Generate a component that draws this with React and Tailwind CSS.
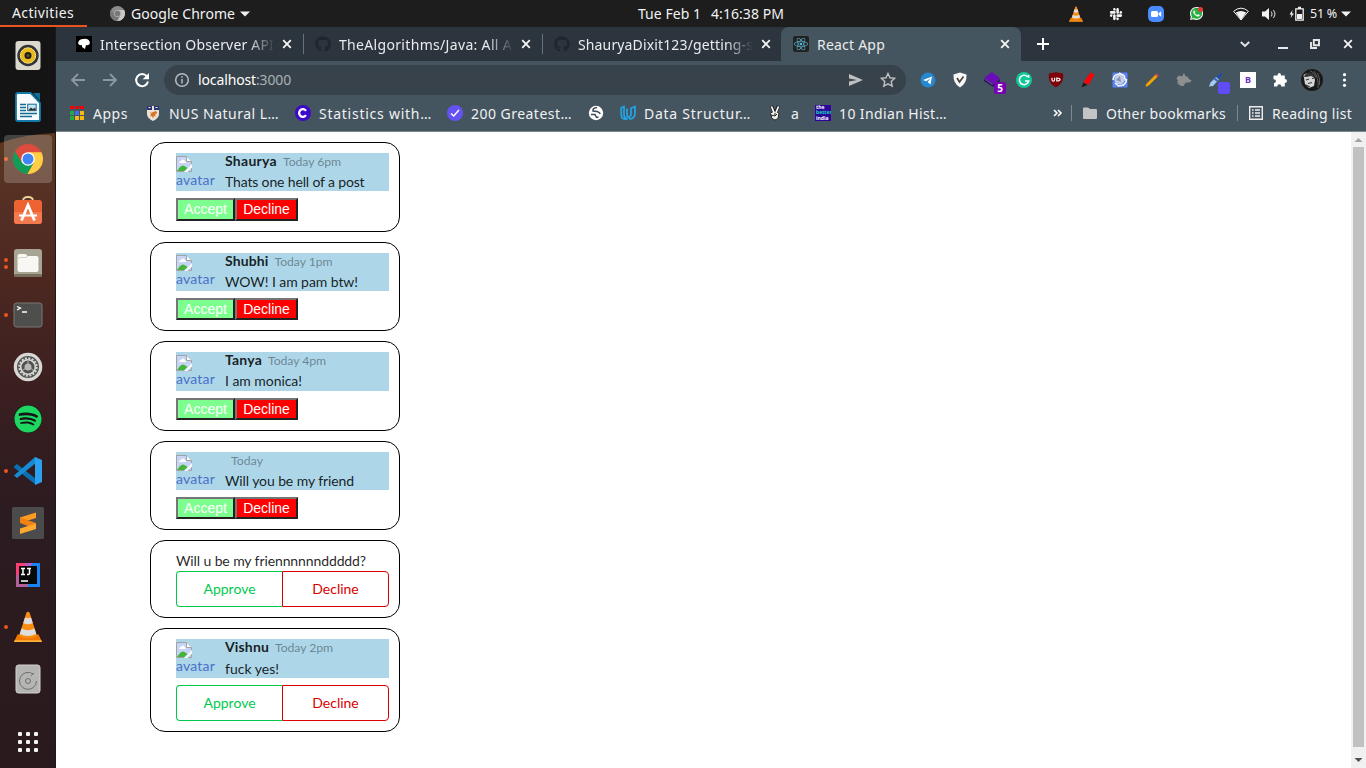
import { useLayoutEffect, useRef } from "react";
import { FaGithub, FaSlack, FaWhatsapp, FaReact, FaSpotify } from "react-icons/fa";

/* Label that spreads its letters over a given width. */
function Fit({ w, className = "", children }) {
  const ref = useRef(null);
  useLayoutEffect(() => {
    const el = ref.current;
    el.style.letterSpacing = "0px";
    const natural = el.getBoundingClientRect().width;
    el.style.letterSpacing = (w - natural) / el.textContent.length + "px";
  }, [w, children]);
  return (
    <span ref={ref} className={"inline-block shrink-0 whitespace-pre " + className}>
      {children}
    </span>
  );
}

function Svg({ s = 16, vb = "0 0 16 16", className = "", children }) {
  return (
    <svg width={s} height={s} viewBox={vb} className={"block shrink-0 " + className} fill="none">
      {children}
    </svg>
  );
}

function Cone({ s }) {
  return (
    <Svg s={s} vb="0 0 28 32">
      <path d="M3.500 23.500h21L28 31H0z" fill="#f07800" />
      <path d="M.6 29.300h26.800L28 31H0z" fill="#ffb13b" />
      <path d="M12.500 1.500Q14 0 15.500 1.500L23 25Q14 30 5 25z" fill="#fb8c12" />
      <path d="M11 6.500Q14 8 17 6.500L18.700 12Q14 14.500 9.300 12zM7.500 17.500Q14 21 20.500 17.500L22.200 23Q14 27 5.800 23z" fill="#dedede" />
    </Svg>
  );
}

function ChromeLogo({ s, gray }) {
  const c = gray ? ["#8a8a8a", "#777", "#c8c8c8", "#b4b4b4", "#777"] : ["#dd4b3e", "#119d58", "#ffce44", "#fff", "#4285f4"];
  return (
    <Svg s={s} vb="0 0 30 30">
      <circle cx="15" cy="15" r="15" fill={c[0]} />
      <path d="M2 7.500A15 15 0 0 0 14.500 30L21 18.500 15 15 9 18.500z" fill={c[1]} />
      <path d="M15 8.200H28.400A15 15 0 0 1 14.500 30L21 18.500z" fill={c[2]} />
      <circle cx="15" cy="15" r="6.800" fill={c[3]} />
      <circle cx="15" cy="15" r="5.500" fill={c[4]} />
    </Svg>
  );
}

function TopBar() {
  return (
    <header className="flex h-[27px] shrink-0 bg-[#1d1d1d] text-[14px] leading-[26px] text-[#f2f2f2]">
      <div className="w-[87px] border-b-2 border-[#e95420] pl-3">
        <Fit w={62}>Activities</Fit>
      </div>
      <div className="flex w-[551px] items-center pl-[23px]">
        <ChromeLogo s={15} gray />
        <Fit w={104} className="ml-[6px]">Google Chrome</Fit>
        <Svg s={10} vb="0 0 10 10" className="ml-[5px]"><path d="M0 2.500h10L5 7.500z" fill="#f2f2f2" /></Svg>
      </div>
      <div className="flex w-[430px] items-center">
        <Fit w={63}>Tue Feb 1</Fit>
        <Fit w={73} className="ml-[10px]">4:16:38 PM</Fit>
      </div>
      <div className="flex items-center">
        <Cone s={16} />
        <FaSlack size={14} className="ml-[25px]" />
        <Svg s={16} className="ml-[25px]">
          <rect width="16" height="16" rx="5" fill="#4a8cff" />
          <rect x="3" y="5" width="7" height="6" rx="1.500" fill="#fff" />
          <path d="M10.500 7.200l2.700-1.900v5.400l-2.700-1.900z" fill="#fff" />
        </Svg>
        <div className="relative ml-6 flex size-4 items-center justify-center">
          <svg width="14" height="14" viewBox="0 0 14 14" className="absolute"><circle cx="7" cy="7" r="6" fill="#25b33e" /></svg>
          <FaWhatsapp size={15} className="relative" />
          <div className="absolute right-[1px] top-[1px] size-[5px] rounded-full bg-[#e53935]" />
        </div>
        <Svg s={16} className="ml-[29px]">
          <path d="M.6 5.300Q8-1 15.400 5.300L8 14z" stroke="#f2f2f2" />
          <path d="M2.800 6.500Q8 3.500 13.200 6.500L8 14z" fill="#f2f2f2" />
        </Svg>
        <Svg s={16} className="ml-3">
          <path d="M1 5.500h3L8 2v12L4 10.500H1z" fill="#f2f2f2" />
          <path d="M10 5.500q2 2.500 0 5M12.300 4q3.200 4 0 8" stroke="#bdbdbd" strokeWidth="1.200" />
        </Svg>
        <Svg s={16} className="ml-[12px]">
          <path d="M3.500 4L.5 8.500h2L1.500 12 5 7.500H3z" fill="#f2f2f2" />
          <path d="M6.800 2.800h7.400v11.400H6.800zM9 1.500h3" stroke="#f2f2f2" strokeWidth="1.300" />
          <path d="M8 8h5v5H8z" fill="#f2f2f2" />
        </Svg>
        <Fit w={27} className="ml-[5px] text-[12.500px]">51 %</Fit>
        <Svg s={10} vb="0 0 10 10" className="ml-[4px]"><path d="M0 2.500h10L5 7.500z" fill="#f2f2f2" /></Svg>
      </div>
    </header>
  );
}

const dockIcons = [
  <Svg s={30} vb="0 0 30 30">
    <rect x="2.500" y="1" width="25" height="29" rx="3" fill="#dcd8ce" />
    <circle cx="15" cy="15.500" r="10.700" fill="#303338" />
    <circle cx="15" cy="15.500" r="7.700" fill="#e9b91d" stroke="#ffe072" />
    <circle cx="15" cy="15.500" r="3.500" fill="#1d1d20" />
    <circle cx="15" cy="15.500" r="1.500" fill="#665522" />
  </Svg>,
  <Svg s={30} vb="0 0 30 30">
    <path d="M5 1h12.500L27 11v17q0 1-1.500 1H5q-2 0-2-2V3q0-2 2-2z" fill="#f7fbfd" stroke="#1279a8" strokeWidth="1.800" />
    <path d="M20 1h7v8z" fill="#0f6d98" />
    <path d="M7 12.500h6M7 15.500h6M7 18.500h6M7 21.500h17M7 24.500h12" stroke="#116b93" strokeWidth="1.300" />
    <rect x="14.700" y="12.200" width="8.500" height="6.500" fill="#c5e6f4" stroke="#116b93" />
    <path d="M15 18.500l3-3 2 1.500 2-1.500 1 3z" fill="#333" />
  </Svg>,
  <ChromeLogo s={30} />,
  <Svg s={30} vb="0 0 30 30" className="-mt-[3px]">
    <path d="M10 6q0-4 5-4t5 4" stroke="#ead39b" strokeWidth="1.800" />
    <rect x="1" y="5" width="28" height="24" rx="3" fill="#ed6332" />
    <path d="M1 17h28v9q0 3-3 3H4q-3 0-3-3z" fill="#f4794c" />
    <path d="M8.500 25.500L15 10l6.500 15.500" stroke="#fff" strokeWidth="2.800" />
    <path d="M6 20.500h18" stroke="#fff" strokeWidth="2" />
  </Svg>,
  <Svg s={30} vb="0 0 30 30">
    <rect x="1" y="1" width="28" height="28" rx="3" fill="#a8a493" />
    <rect x="1" y="26" width="28" height="3" rx="1.500" fill="#77705e" />
    <path d="M6.500 6h6l2 2h9q2 0 2 2v12q0 2-2 2h-17q-2 0-2-2V8q0-2 2-2z" fill="#f8f7f4" />
    <path d="M5 11q0-1.500 2-1.500h6L15 8" stroke="#d5d2c9" />
  </Svg>,
  <Svg s={30} vb="0 0 30 30">
    <rect x="1" y="3" width="28" height="24" rx="2.500" fill="#4e4e4c" stroke="#7b7874" />
    <path d="M4 6.500l3.500 1.500L4 10M9 12h5" stroke="#fff" strokeWidth="1.300" />
  </Svg>,
  <Svg s={30} vb="0 0 30 30">
    <circle cx="15" cy="15" r="14.300" fill="#d7d7d5" />
    <circle cx="15" cy="15" r="11" fill="#50504d" />
    <circle cx="15" cy="15" r="8.700" stroke="#d7d7d5" strokeWidth="2" strokeDasharray="2 1.420" />
    <circle cx="15" cy="15" r="7.300" stroke="#d7d7d5" strokeWidth="1.600" />
    <circle cx="15" cy="15" r="3.500" fill="#b7b7b5" />
    <path d="M15 9v4M10 18l3-2M20 18l-3-2" stroke="#b7b7b5" />
  </Svg>,
  <div className="flex size-[28px] items-center justify-center rounded-full bg-[#161616] text-[#1ed760]"><FaSpotify size={28} /></div>,
  <Svg s={30} vb="0 0 30 30">
    <path d="M1 10.500l3-2.500 19 15v6L1 11.500z" fill="#0a70b4" />
    <path d="M22 1L1 19.500 4 22 23 7z" fill="#168bd2" />
    <path d="M22 1l7 3v22l-7 3z" fill="#2ba0ee" />
  </Svg>,
  <Svg s={32} vb="0 0 32 32">
    <rect width="32" height="32" rx="1.500" fill="#4b4b4b" />
    <path d="M8 10.500L24 5.500v5.500L8 16z" fill="#ff9b20" />
    <path d="M8 10.500L24 16v6L8 16z" fill="#f08112" />
    <path d="M8 21.500L24 16.500V22L8 27z" fill="#ffa72e" />
  </Svg>,
  <Svg s={24} vb="0 0 24 24">
    <path d="M0 0h12v12H0z" fill="#fb3f75" />
    <path d="M12 0h12v24H12z" fill="#1784f5" />
    <path d="M0 12h12v12H0z" fill="#b0619a" />
    <path d="M8 0h9L12 6z" fill="#b65bc9" />
    <rect x="3" y="3" width="18" height="18" fill="#080808" />
    <path d="M5 5.500h4M7 5.500v6M5 11.500h4M11 5.500h4M13.500 5.500v5q0 1-2.500 1" stroke="#fff" strokeWidth="1.500" />
    <path d="M5 18h7" stroke="#fff" strokeWidth="1.500" />
  </Svg>,
  <Cone s={32} />,
  <Svg s={30} vb="0 0 30 30">
    <rect x="3" y="1" width="24" height="28" rx="2.500" fill="#b5b5b3" stroke="#d2d2d0" />
    <path d="M20 10A8.500 8.500 0 1 0 23.500 17M18 12l3-3" stroke="#6e6e6c" />
    <circle cx="15" cy="17" r="2.500" stroke="#6e6e6c" />
  </Svg>,
];
const running = { 2: 1, 4: 2, 5: 1, 8: 1, 11: 1 };

function Dock() {
  return (
    <aside className="relative flex w-14 shrink-0 flex-col border-r border-[#201719] bg-[linear-gradient(#5a3820_0,#5a3820_115px,#552f24_180px,#4b2720_260px,#3a1f20_365px,#2c1b20_480px,#2a1a1d_100%)] pt-[2px]">
      <svg width="55" height="120" viewBox="0 0 55 120" className="absolute left-0 top-0">
        <path d="M0 0h55v106Q25 107 0 116z" fill="#141414" />
      </svg>
      {dockIcons.map((icon, i) => (
        <div key={i} className="relative flex h-[52px] shrink-0 items-center">
          <div className="flex w-2 flex-col items-end gap-[3px]">
            {Array.from({ length: running[i] || 0 }, (_, k) => (
              <div key={k} className="size-1 rounded-full bg-[#e95420]" />
            ))}
          </div>
          <div className={"-ml-1 flex size-12 shrink-0 items-center justify-center rounded-[4px] " + (i === 2 ? "bg-white/20" : "")}>{icon}</div>
        </div>
      ))}
      <div className="mt-[27px] grid w-full grid-cols-[4px_4px_4px] justify-center gap-1 pl-[1px]">
        {Array.from({ length: 9 }, (_, k) => (
          <div key={k} className="size-1 rounded-[1px] bg-[#f2f2f2]" />
        ))}
      </div>
    </aside>
  );
}

const X = ({ className = "" }) => (
  <Svg s={10} vb="0 0 10 10" className={className}><path d="M1.200 1.200l7.600 7.600M8.800 1.200L1.200 8.800" stroke="#f5f5f5" strokeWidth="1.800" /></Svg>
);

function Tab({ icon, title, w, last, fadeCls, cls }) {
  return (
    <div className={"flex h-full shrink-0 items-center " + cls}>
      {icon}
      <div className={"ml-2 w-[175px] overflow-hidden whitespace-nowrap " + fadeCls}>
        <Fit w={w}>{title}</Fit>
      </div>
      <X className="ml-[8px]" />
      {!last && <div className="ml-[11px] h-5 w-px bg-[#66727a]" />}
    </div>
  );
}

function TabStrip() {
  const fade = "[mask-image:linear-gradient(to_right,black_148px,transparent_175px)]";
  return (
    <div className="flex h-[34px] shrink-0 bg-[#2c353d] text-[14px] text-[#e9ebec]">
      <Tab cls="pl-5 w-[248px]" fadeCls={fade} w={174} title="Intersection Observer API" icon={
        <Svg><path d="M0 0h16v16H0z" fill="#000" /><path d="M2 7q1-4 5-4 6-1 7 4-1 3-4 2l-1 4-3-2V9Q3 10 2 7z" fill="#fff" /></Svg>} />
      <Tab cls="pl-[11px] w-[239px]" fadeCls={fade} w={173} title="TheAlgorithms/Java: All A" icon={<FaGithub size={16} className="shrink-0 text-[#20262c]" />} />
      <Tab cls="pl-[11px] w-[238px]" fadeCls={fade} last w={175} title="ShauryaDixit123/getting-s" icon={<FaGithub size={16} className="shrink-0 text-[#20262c]" />} />
      <div className="flex h-full w-[240px] rounded-t-lg bg-[#455560]">
        <Tab cls="pl-[12px]" fadeCls="" last w={68} title="React App" icon={
          <div className="flex size-4 items-center justify-center rounded-[2px] bg-[#222]"><FaReact size={14} className="text-[#5cb8d6]" /></div>} />
      </div>
      <div className="flex flex-1 items-center">
        <Svg s={12} vb="0 0 12 12" className="ml-[16px]"><path d="M6 0v12M0 6h12" stroke="#fff" strokeWidth="2" /></Svg>
        <Svg s={10} vb="0 0 10 10" className="ml-[191px]"><path d="M.8 3L5 7l4.200-4" stroke="#e8e8e8" strokeWidth="1.800" /></Svg>
        <div className="ml-[28px] mt-[8px] h-[2px] w-[10px] bg-[#e8e8e8]" />
        <Svg s={10} vb="0 0 10 10" className="ml-[22px]"><path d="M3.800 1h5.200v5.200H3.800zM1 3v6h6" stroke="#e8e8e8" strokeWidth="1.900" /></Svg>
        <X className="ml-[23px]" />
      </div>
    </div>
  );
}

function Toolbar() {
  return (
    <div className="flex h-[37px] shrink-0 items-center bg-[#455560] text-[14px]">
      <Svg className="ml-[14px]"><path d="M15 8H2M8 2L2 8l6 6" stroke="#8d979d" strokeWidth="1.800" /></Svg>
      <Svg className="ml-4"><path d="M1 8h13M8 2l6 6-6 6" stroke="#8d979d" strokeWidth="1.800" /></Svg>
      <Svg className="ml-4"><path d="M12.800 4.300A6 6 0 1 0 14 9.500" stroke="#fff" strokeWidth="2" /><path d="M15 1v6.300H8.700z" fill="#fff" /></Svg>
      <div className="ml-[14px] flex h-[30px] w-[742px] items-center rounded-full bg-[#37424a]">
        <Svg className="ml-[10px]"><circle cx="8" cy="8" r="6.300" stroke="#b7bcc0" strokeWidth="1.500" /><path d="M8 7v4.500M8 4.300v1.500" stroke="#b7bcc0" strokeWidth="1.500" /></Svg>
        <Fit w={58} className="ml-2 text-white">localhost</Fit>
        <Fit w={35} className="text-[#aab0b4]">:3000</Fit>
        <Svg className="ml-[557px]"><path d="M1 2l14 6-14 6V9.500L9 8 1 6.500z" fill="#bdbfc1" /></Svg>
        <Svg className="ml-4"><path d="M8 1.500l2 4.300 4.700.5-3.500 3.200 1 4.700L8 11.800l-4.200 2.400 1-4.700L1.300 6.300l4.700-.5z" stroke="#bfc1c3" strokeWidth="1.400" /></Svg>
      </div>
      <div className="ml-[14px] flex items-center gap-4">
        <Svg><circle cx="8" cy="8" r="7.500" fill="#2588d0" /><path d="M3 8l9-3.500-1.500 8L7.500 10l3-3.500L6 9.300z" fill="#fff" /></Svg>
        <Svg><path d="M1.500 2.500L8 .5l6.500 2q.5 9-6.500 13-7-4-6.500-13z" fill="#f7f7f7" /><path d="M5 6l2.500 4L11.500 4.500" stroke="#444" strokeWidth="1.700" /></Svg>
        <div className="relative size-4">
          <Svg><path d="M0 6l8-6 8 6-7 6z" fill="#6a0cb8" /><path d="M0 7l8 6 8-6v2l-7 6-9-6z" fill="#31106e" /></Svg>
          <div className="absolute left-[10px] top-[10px] flex h-3 w-3 items-center justify-center rounded-[2px] bg-[#7900b8] text-[10px] font-bold leading-none text-white">5</div>
        </div>
        <Svg><circle cx="8" cy="8" r="8" fill="#10c896" /><path d="M11.500 4.700A4.700 4.700 0 1 0 12.700 9H9M12.500 5.800V3" stroke="#fff" strokeWidth="1.500" /></Svg>
        <Svg><path d="M1 1.500L8 .3l7 1.200q1.500 10-7 14-8.500-4-7-14z" fill="#7e0008" /><path d="M4 5.700v2q0 1.500 1.300 1.500t1.300-1.500v-2M8.800 5.700v3.600M8.800 6q3.200 0 3.200 1.500T8.800 9z" stroke="#fff" strokeWidth="1.200" /></Svg>
        <Svg><path d="M10.500.5l4 2-6 10.500-5-3z" fill="#f50505" /><path d="M3.200 10.500L7.500 13 1.500 15.500z" fill="#1c1c1c" /></Svg>
        <Svg>
          <rect x=".5" y=".5" width="15" height="15" rx="1" fill="#5b82f5" />
          <circle cx="7.500" cy="7.500" r="5" fill="#c4cfe4" />
          <path d="M4 8l4-4 1 6z" fill="#8496bd" />
          <path d="M1 8Q1.500 2 8 2M7 1l5 2.500 1.500 5M14.500 7q0 5-5 6.500M12 13L6.500 14 3 11" stroke="#f3f7ff" strokeWidth="1.500" />
        </Svg>
        <Svg><path d="M12 2.700l1.500 1.500-9 9-2.500 1 1-2.500z" fill="#f8a500" stroke="#f8a500" /><path d="M12 2.300l2 2" stroke="#e73958" strokeWidth="2" /></Svg>
        <Svg><path d="M.5 6.500L2.500 3.500 6 4.500 8 1l1.500 3.200 2.500.8.700 2L15.700 8.500 14 10.300l-4.500.4L7.500 14H4.500l-1-1.500H1.500l1-2H.7l1.300-2z" fill="#8f8f8f" /></Svg>
        <div className="relative size-4">
          <Svg><path d="M9 5l4-4 1 1.500L10.500 7z" fill="#1848c8" /><path d="M8 5l3 2.500L5 14l-4 .5 1.500-4z" fill="#9fcbf4" /><path d="M6.500 6.500l3 2.500" stroke="#2f62c8" strokeWidth="2" /></Svg>
          <div className="absolute left-[10px] top-[10px] size-3 rounded-[2px] bg-[#604cf5]" />
        </div>
        <div className="flex size-4 items-center justify-center bg-white text-[9px] font-bold leading-none text-[#6730c0]">B</div>
        <Svg><path d="M2 3.500h3.500Q5.500 1 7.300 1t1.800 2.500h3.700V7Q15 7.200 15 9t-2.200 2v3.500H9.300q0-2.200-2-2.200t-2 2.200H2V11q2 0 2-1.800T1.500 7.300V4z" fill="#fff" /></Svg>
      </div>
      <Svg s={22} vb="0 0 22 22" className="ml-[13px]">
        <circle cx="11" cy="11" r="11" fill="#191919" />
        <path d="M2.500 6Q6 3 12 5.500L14 11l-1 6-5 2-4-4z" fill="#d4d4d4" />
        <path d="M3 8Q5 2 12 4l2 5-4-2-5 1z" fill="#333" />
        <path d="M5 11l3-1M11 9.500l2-.5M7 14.500l4-1M5 16l4 2" stroke="#3a3a3a" strokeWidth="1.200" />
        <path d="M13 2q5 7 4 17M16.500 4q3 6 2 12M9 1.500q5 2 6 7" stroke="#6a6a6a" strokeWidth=".8" />
      </Svg>
      <Svg className="ml-[14px]"><g fill="#fff"><circle cx="7.500" cy="2.700" r="1.600" /><circle cx="7.500" cy="8" r="1.600" /><circle cx="7.500" cy="13.300" r="1.600" /></g></Svg>
    </div>
  );
}

function Bookmark({ icon, w, cls = "", children }) {
  return (
    <div className={"flex shrink-0 items-center gap-2 " + cls}>
      {icon}
      {children && <Fit w={w}>{children}</Fit>}
    </div>
  );
}

function Bookmarks() {
  return (
    <div className="flex h-[34px] shrink-0 items-center border-b border-[#7a858c] bg-[#455560] pb-[3px] text-[14px] text-[#f0f1f2]">
      <Bookmark w={35} cls="w-[76px] ml-[13px]" icon={
        <Svg>
          <path d="M1 1h4v3H1zM6 1h4v3H6zM11 1h4v3h-4z" fill="#f00505" />
          <path d="M1 6h4v4H1zM1 11h4v4H1z" fill="#25aa4b" /><path d="M6 6h4v4H6z" fill="#4568f5" />
          <path d="M11 6h4v4h-4zM6 11h4v4H6zM11 11h4v4h-4z" fill="#f5b812" />
        </Svg>}>Apps</Bookmark>
      <Bookmark w={110} cls="w-[150px]" icon={
        <Svg><path d="M2 1h12v8q0 4-6 7-6-3-6-7z" fill="#eee4d6" /><path d="M2 1h5v4H2zM9 1h5v4H9z" fill="#2d3474" /><path d="M3.500 2.500h2M10.500 2.500h2" stroke="#eee" /><path d="M4 6.500l2 1.500 2-1 3-1 1.500 2-2.500 1.500 1 2-2-.5-1 2.500-1-2.500-2 .5 1-2.500z" fill="#d9722c" /></Svg>}>NUS Natural L…</Bookmark>
      <Bookmark w={113} cls="w-[152px]" icon={<Svg><circle cx="8" cy="8" r="8" fill="#3d08c8" /><path d="M11 5.800A3.800 3.800 0 1 0 11 10.200" stroke="#fff" strokeWidth="2.300" /></Svg>}>Statistics with…</Bookmark>
      <Bookmark w={101} cls="w-[141px]" icon={<Svg><circle cx="8" cy="8" r="8" fill="#6452f5" /><path d="M4 8.500L6.700 11 12 5" stroke="#fff" strokeWidth="1.500" /></Svg>}>200 Greatest…</Bookmark>
      <Bookmark cls="w-[32px]" icon={<Svg><circle cx="8" cy="8" r="7.200" fill="#fff" /><path d="M9 2.500Q4.500 3 5 6l4 .5q3 1 3 2.500M3 9.500h4l1.500 3 2-.5" stroke="#3e4b54" strokeWidth="1.500" /></Svg>} />
      <Bookmark w={107} cls="w-[147px]" icon={<Svg><path d="M1.200 2.800L4 1.500v8q0 3.500 3.500 4.500-5.500 1-6.200-3.500zM7 3.500v6q0 3 2.500 3M15 1.500V8q0 5-4.500 6Q8 13.500 11 10V3.200z" stroke="#22a5e8" strokeWidth="1.700" /></Svg>}>Data Structur…</Bookmark>
      <Bookmark w={8} cls="w-[48px]" icon={<Svg><path d="M4.500 1l2.500 6M11.500 1L9 7" stroke="#222" strokeWidth="3.300" /><path d="M3.500 8.500q1-2 4-2t4.500 2l-1 5q-3 3-6 0z" fill="#f0eee8" stroke="#222" /><path d="M4.500 1.500l2.500 6M11.500 1.500L9 7.500" stroke="#fff" strokeWidth="1.700" /><path d="M4 10l4 1 2-2M8 8v3" stroke="#222" /></Svg>}>a</Bookmark>
      <Bookmark w={108} cls="w-[238px]" icon={<div className="flex size-4 flex-col overflow-hidden bg-[#2c069b] pl-px text-[5px] font-bold leading-[5.300px] text-white"><span>the</span><span className="text-[#14d7bd]">better</span><span>india</span></div>}>10 Indian Hist…</Bookmark>
      <Svg s={10} vb="0 0 10 10"><path d="M1 2l3 3-3 3M5 2l3 3-3 3" stroke="#fff" strokeWidth="1.600" /></Svg>
      <div className="ml-[8px] h-4 w-px bg-[#7d888f]" />
      <Bookmark w={120} cls="ml-[10px] w-[155px]" icon={<Svg><path d="M2 2.500h4L8 4h6q1 0 1 1v8q0 1-1 1H2q-1 0-1-1V3.500q0-1 1-1z" fill="#c4c4c4" /></Svg>}>Other bookmarks</Bookmark>
      <div className="h-4 w-px bg-[#7d888f]" />
      <Bookmark w={80} cls="ml-[10px]" icon={<Svg><path d="M1.700 1.700h12.600v12.600H1.700z" stroke="#eee" strokeWidth="1.400" /><path d="M4 5h1.600M4 8h1.600M4 11h1.600M7 5h5M7 8h5M7 11h5" stroke="#eee" strokeWidth="1.500" /></Svg>}>Reading list</Bookmark>
    </div>
  );
}

const BrokenImage = () => (
  <Svg>
    <path d="M.5.500h10l5 5V9L9 15.500H.5z" fill="#c6d5f5" />
    <path d="M3 7q0-2 2-2 1-2.500 3-1t2 3z" fill="#fff" />
    <path d="M1 15l3-4q3-3 6 0l1.500 1L8.500 15z" fill="#43b53b" />
    <path d="M15.500 8V5.500l-5-5H.5v15h8M15.500 12v3.500H12" stroke="#a0a3a5" />
    <path d="M10.500.500v5h5" fill="#fff" stroke="#a0a3a5" />
    <path d="M8 16l8-8v3.500L11.500 16z" fill="#f4f7fa" />
  </Svg>
);

function Comment({ name, nameW, time, timeW, text, textW, h = "h-[38px]", iconGap = "pt-[3px]", altGap = "-mt-px", textGap = "mt-[4px]" }) {
  return (
    <div className={"flex bg-[#add6e8] " + h}>
      <div className={"w-[49px] text-[14px] leading-[17px] text-[#4a70c8] " + iconGap}>
        <BrokenImage />
        <div className={altGap}><Fit w={39}>avatar</Fit></div>
      </div>
      <div className="-mt-px text-[14px] leading-[17px] text-black/87">
        <div className="flex h-[17px]">
          {name && <Fit w={nameW} className="font-bold">{name}</Fit>}
          <Fit w={timeW} className="ml-[6px] pt-px text-[12.250px] text-black/40">{time}</Fit>
        </div>
        <div className={textGap}><Fit w={textW}>{text}</Fit></div>
      </div>
    </div>
  );
}

function PlainButtons({ h = "h-[22px]", lh = "leading-[18px]" }) {
  const base = "border-2 border-t-[#767676] border-l-[#767676] border-r-[#212121] border-b-[#212121] font-['Liberation_Sans',sans-serif] text-[14px] text-white " + h + " " + lh + " ";
  return (
    <div className="mt-[7px] flex">
      <button className={base + "w-[59px] bg-[#7dff90]"}>Accept</button>
      <button className={base + "w-[63px] bg-[#ff0000]"}>Decline</button>
    </div>
  );
}

function OutlineButtons({ cls }) {
  return (
    <div className={"flex h-9 text-[14px] " + cls}>
      <button className="w-[106px] rounded-l-[4px] border border-r-0 border-[#00ca4e] pb-[2px] text-[#00ca4e]">Approve</button>
      <button className="w-[107px] rounded-r-[4px] border border-[#db0000] pb-[2px] text-[#db0000]">Decline</button>
    </div>
  );
}

function Card({ cls, children }) {
  return <section className={"w-[250px] shrink-0 rounded-[15px] border border-black pl-[25px] pr-[10px] pt-[10px] " + cls}>{children}</section>;
}

function Page() {
  return (
    <main className="flex min-h-0 flex-1 bg-white font-[Lato,sans-serif]">
      <div className="flex flex-1 flex-col gap-[10px] pl-[94px] pt-[10px]">
        <Card cls="h-[90px]">
          <Comment name="Shaurya" nameW={52} time="Today 6pm" timeW={58} text="Thats one hell of a post" textW={139.5} />
          <PlainButtons h="h-[23px]" lh="leading-[19px]" />
        </Card>
        <Card cls="h-[89px]">
          <Comment name="Shubhi" nameW={43.5} time="Today 1pm" timeW={58} text="WOW! I am pam btw!" textW={133} iconGap="pt-[2px]" />
          <PlainButtons />
        </Card>
        <Card cls="h-[90px]">
          <Comment name="Tanya" nameW={37} time="Today 4pm" timeW={58} text="I am monica!" textW={77} h="h-[39px]" />
          <PlainButtons />
        </Card>
        <Card cls="h-[89px]">
          <Comment time="Today" timeW={32} text="Will you be my friend" textW={129} />
          <PlainButtons />
        </Card>
        <Card cls="h-[78px]">
          <div className="h-5 whitespace-nowrap text-[14px] leading-5 text-black/87"><Fit w={190}>Will u be my friennnnnnddddd?</Fit></div>
          <OutlineButtons cls="" />
        </Card>
        <Card cls="h-[104px]">
          <Comment name="Vishnu" nameW={44} time="Today 2pm" timeW={58} text="fuck yes!" textW={54} h="h-[39px]" textGap="mt-[5px]" />
          <OutlineButtons cls="mt-[7px]" />
        </Card>
      </div>
      <div className="flex w-[15px] shrink-0 flex-col items-center justify-between bg-[#f1f1f1] py-[3px]">
        <Svg s={9} vb="0 0 9 9"><path d="M.5 7L4.500 3l4 4z" fill="#a3a3a3" /></Svg>
        <div className="mb-[9px] mt-[3px] w-[11px] flex-1 bg-[#c1c1c1]" />
        <Svg s={9} vb="0 0 9 9"><path d="M.5 2h8l-4 4z" fill="#505050" /></Svg>
      </div>
    </main>
  );
}

export default function App() {
  return (
    <div className="flex h-[768px] w-[1366px] flex-col overflow-hidden font-['Noto_Sans',sans-serif]">
      <TopBar />
      <div className="flex min-h-0 flex-1">
        <Dock />
        <div className="flex min-w-0 flex-1 flex-col">
          <TabStrip />
          <Toolbar />
          <Bookmarks />
          <Page />
        </div>
      </div>
    </div>
  );
}
